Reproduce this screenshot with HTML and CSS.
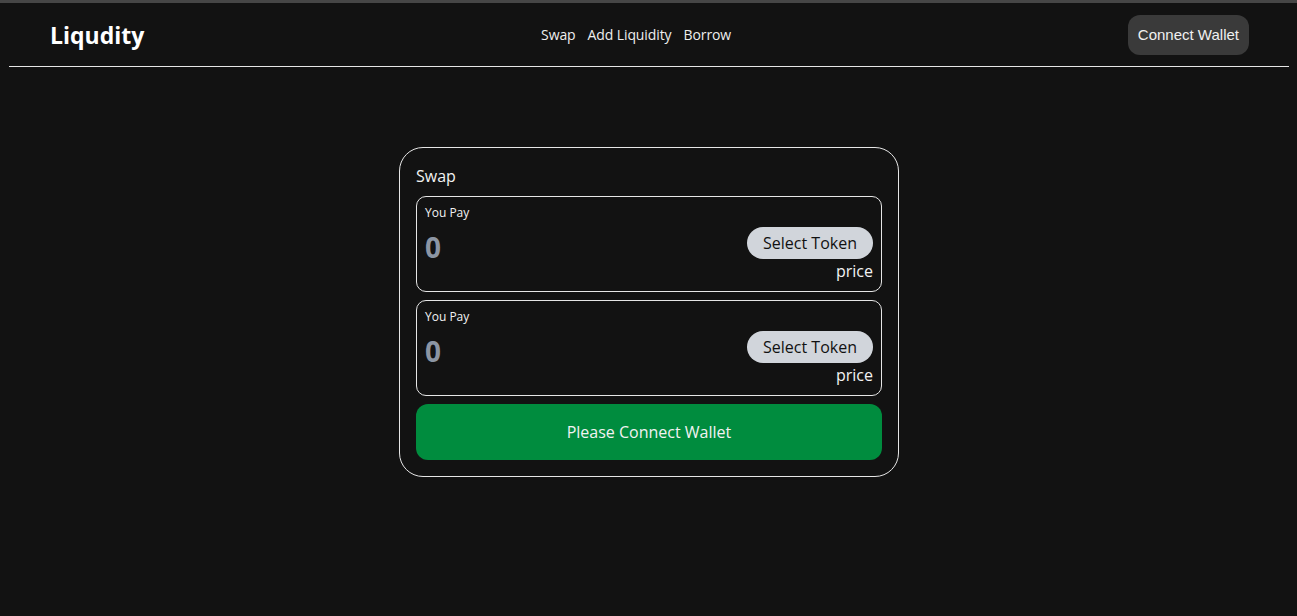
FILE: index.html
```html
<!DOCTYPE html>
<html>
<head>
<meta charset="utf-8">
<link rel="stylesheet" href="styles.css">
</head>
<body>
<div class="topbar"></div>
<header class="header">
  <div class="logo">Liqudity</div>
  <nav class="nav">
    <a class="nav-link">Swap</a>
    <a class="nav-link">Add Liquidity</a>
    <a class="nav-link">Borrow</a>
  </nav>
  <button class="wallet-btn">Connect Wallet</button>
</header>
<main class="main">
  <section class="card">
    <div class="card-title">Swap</div>
    <div class="box">
      <div class="box-label">You Pay</div>
      <div class="box-row">
        <div class="amount">0</div>
        <div class="box-right">
          <button class="token-btn">Select Token</button>
          <div class="price">price</div>
        </div>
      </div>
    </div>
    <div class="box">
      <div class="box-label">You Pay</div>
      <div class="box-row">
        <div class="amount">0</div>
        <div class="box-right">
          <button class="token-btn">Select Token</button>
          <div class="price">price</div>
        </div>
      </div>
    </div>
    <button class="connect-btn">Please Connect Wallet</button>
  </section>
</main>
</body>
</html>
```
FILE: styles.css
```css
* { box-sizing: border-box; }
html, body {
  margin: 0;
  background: #121212;
  color: #f2f2f2;
  font-family: "Open Sans", "Noto Sans", sans-serif;
}
body { height: 616px; overflow: hidden; }
.topbar { height: 3px; background: #464646; }
.header {
  margin-left: 9px;
  width: 1280px;
  height: 64px;
  padding: 0 40px 0 41px;
  border-bottom: 1px solid #e6e6e6;
  display: flex;
  align-items: center;
  justify-content: space-between;
}
.logo {
  font-size: 23px;
  font-weight: 700;
  color: #fff;
}
.nav { display: flex; gap: 12px; font-size: 14px; letter-spacing: -0.1px; }
.nav-link { color: #eee; }
.wallet-btn {
  height: 40px;
  padding: 0 10px;
  border: none;
  border-radius: 12px;
  background: #3a3a3a;
  color: #f0f0f0;
  font-family: "Liberation Sans", Arial, sans-serif;
  font-size: 15px;
}
.main { display: flex; justify-content: center; padding-top: 80px; padding-left: 1px; }
.card {
  width: 500px;
  border: 1px solid #e6e6e6;
  border-radius: 24px;
  padding: 16px;
  display: flex;
  flex-direction: column;
  gap: 8px;
}
.card-title { font-size: 16px; line-height: 24px; }
.box {
  height: 96px;
  border: 1px solid #e6e6e6;
  border-radius: 10px;
  padding: 8px 8px 0 8px;
}
.box-label { font-size: 12px; line-height: 16px; }
.box-row { display: flex; justify-content: space-between; align-items: flex-start; }
.amount {
  font-size: 28px;
  font-weight: 700;
  color: #8c95a3;
  margin-top: 8px;
  line-height: 36px;
}
.box-right { display: flex; flex-direction: column; align-items: flex-end; margin-top: 6px; }
.token-btn {
  height: 32px;
  padding: 0 16px;
  border: none;
  border-radius: 16px;
  background: #d1d5db;
  color: #111;
  font-family: inherit;
  font-size: 16px;
}
.price { font-size: 16px; line-height: 24px; }
.connect-btn {
  height: 56px;
  border: none;
  border-radius: 12px;
  background: #008c3e;
  color: #f2f2f2;
  font-family: inherit;
  font-size: 16px;
}
```
